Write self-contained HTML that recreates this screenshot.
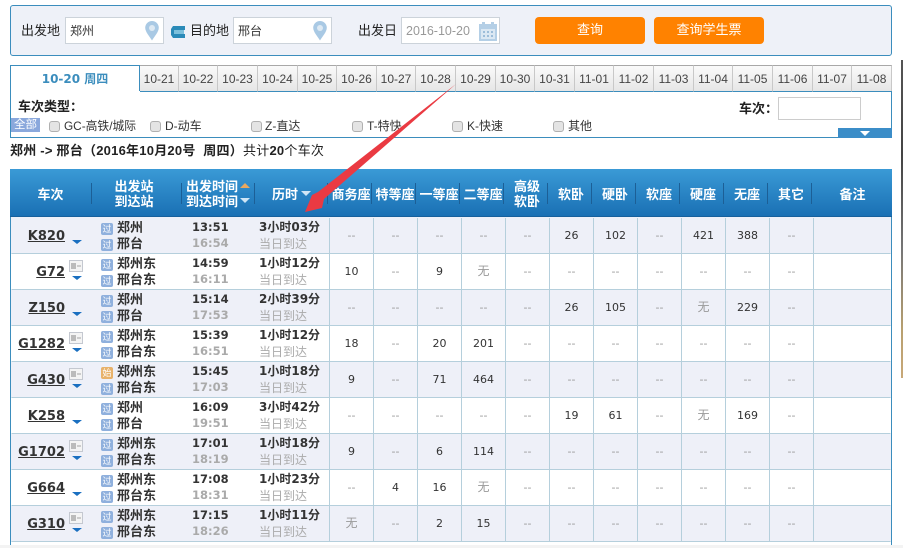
<!DOCTYPE html>
<html><head><meta charset="utf-8"><style>
html,body{margin:0;padding:0;width:903px;height:548px;overflow:hidden;background:#fff;font-family:"Liberation Sans","Noto Sans CJK SC",sans-serif;color:#222}
.a{position:absolute}
#top{left:10px;top:5px;width:880px;height:49px;background:#eef1f8;border:1px solid #3b8dbd;border-radius:3px}
.l{font-size:13px;top:22px;line-height:17px;color:#222}
.inp{top:17px;height:25px;background:#fff;border:1px solid #ccd3da;font-size:12px;line-height:27px;padding-left:4px;color:#333;box-sizing:content-box}
.btn{top:17px;height:27px;background:#ff8200;border-radius:4px;color:#fff;font-size:13px;line-height:26px;text-align:center}
.tab{top:65px;height:25px;background:linear-gradient(#fafafa,#e6e6e6);border-top:1px solid #a8a8a8;border-right:1px solid #c8c8c8;border-bottom:1px solid #3b8dbd;font-size:12px;line-height:26px;text-align:center;color:#444;box-sizing:content-box}
.cb{top:121px;width:9px;height:9px;background:#e4e4e4;border:1px solid #b0b0b0;border-radius:3px}
.ct{top:118px;font-size:12px;line-height:17px;color:#333}
#head{left:10px;top:169px;width:882px;height:48px;background:linear-gradient(#3a9ad6,#1a70b4);border-bottom:1px solid #17609c;box-sizing:border-box}
.h{position:absolute;top:169px;height:50px;color:#fff;font-weight:bold;font-size:13px;line-height:15px;text-align:center;display:flex;align-items:center;justify-content:center}
.s{position:absolute;top:183px;width:1px;height:21px;background:#1c5f96}
.r{position:absolute;left:11px;width:880px;height:36px;border-bottom:1px solid #b5cfdc;box-sizing:border-box;border-left:1px solid;border-right:1px solid}
.o{background:#eef0f8;border-left-color:#eef0f8;border-right-color:#eef0f8}
.w{background:#fff;border-left-color:#fff;border-right-color:#fff}
.r i{font-style:normal;position:absolute;top:0;height:35px;width:43px;border-left:1px solid #b5cfdc;text-align:center;line-height:35px;font-size:11px;font-family:"DejaVu Sans","Noto Sans CJK SC",sans-serif;color:#333}
.r i.n{color:#999}
.r b.t{position:absolute;top:11px;font:bold 13px/16px "DejaVu Sans",sans-serif;color:#333;text-decoration:underline;width:55px;text-align:right;left:0;margin-left:-2px}
.r u{position:absolute;left:60px;top:22px;width:0;height:0;border-style:solid;border-color:#1a6fc0 transparent transparent;border-width:4px 5px 0;text-decoration:none}
.r s{position:absolute;left:57px;top:6px;width:14px;height:12px;background:#f4f4f4;border:1px solid #c4c8d0;text-decoration:none;box-sizing:border-box}
.r s:before{content:"";position:absolute;left:1px;top:2px;width:5px;height:6px;background:#bbb}
.r s:after{content:"";position:absolute;left:7px;top:4px;width:4px;height:2px;background:#ccc}
.r em{position:absolute;left:89px;width:12px;height:12px;background:#8fb0dd;border-radius:2px;font-style:normal;color:#fff;font-size:9px;line-height:12px;text-align:center}
.r em.q{background:#e8b26a}
.r span{position:absolute;line-height:16px;white-space:nowrap}
.st{left:105px;font-size:13px;font-weight:bold;color:#333}
.tm{left:180px;font:bold 11.5px/16px "DejaVu Sans",sans-serif!important;color:#333;transform:translateY(-1px)}
.tm.g{color:#aaa}
.du{left:247px;font:bold 12px/16px "DejaVu Sans","Noto Sans CJK SC",sans-serif!important;color:#333;transform:translateY(-1px)}
.dd{left:247px;font-size:12px;color:#aaa}
</style></head><body>
<div class="a" id="top"></div>
<div class="a l" style="left:21px">出发地</div>
<div class="a inp" style="left:65px;width:93px">郑州</div>
<svg class="a" style="left:145px;top:21px" width="14" height="20" viewBox="0 0 14 20"><path d="M7 0a6.8 6.8 0 0 1 6.8 6.8C13.8 11 9 16 7 19.5 5 16 .2 11 .2 6.8A6.8 6.8 0 0 1 7 0z" fill="#a9c9e4"/><circle cx="7" cy="7" r="3" fill="#dde9f3"/></svg>
<svg class="a" style="left:171px;top:26px" width="14" height="12" viewBox="0 0 14 12"><path d="M2 0h12v4H3v4h11v4H2L0 9V3z" fill="#2a8ab8"/><rect x="3" y="4" width="10" height="4" fill="#7cc0dc"/></svg>
<div class="a l" style="left:190px">目的地</div>
<div class="a inp" style="left:233px;width:93px">邢台</div>
<svg class="a" style="left:313px;top:21px" width="14" height="20" viewBox="0 0 14 20"><path d="M7 0a6.8 6.8 0 0 1 6.8 6.8C13.8 11 9 16 7 19.5 5 16 .2 11 .2 6.8A6.8 6.8 0 0 1 7 0z" fill="#a9c9e4"/><circle cx="7" cy="7" r="3" fill="#dde9f3"/></svg>
<div class="a l" style="left:358px">出发日</div>
<div class="a inp" style="left:401px;width:93px;color:#999;font-size:12.5px">2016-10-20</div>
<svg class="a" style="left:479px;top:21px" width="18" height="20" viewBox="0 0 18 20"><path d="M0 3h3V1h3v2h6V1h3v2h3v17H0z" fill="#b4cfe6"/><path d="M2 8h14v10H2z" fill="#dbe8f3"/><path d="M4 10h2v2H4zM8 10h2v2H8zM12 10h2v2h-2zM4 14h2v2H4zM8 14h2v2H8zM12 14h2v2h-2z" fill="#9cbdd9"/></svg>
<div class="a btn" style="left:535px;width:110px">查询</div>
<div class="a btn" style="left:654px;width:110px">查询学生票</div>

<div class="a" style="left:10px;top:65px;width:130px;height:26px;border-top:1px solid #3b8dbd;border-left:1px solid #3b8dbd;border-right:1px solid #3b8dbd;box-sizing:border-box;color:#3b8dbd;font:bold 12px/26px 'DejaVu Sans','Noto Sans CJK SC',sans-serif;text-align:center">10-20 周四</div>
<div class="a tab" style="left:140px;width:38px">10-21</div>
<div class="a tab" style="left:179px;width:38px">10-22</div>
<div class="a tab" style="left:218px;width:39px">10-23</div>
<div class="a tab" style="left:258px;width:39px">10-24</div>
<div class="a tab" style="left:298px;width:38px">10-25</div>
<div class="a tab" style="left:337px;width:39px">10-26</div>
<div class="a tab" style="left:377px;width:38px">10-27</div>
<div class="a tab" style="left:416px;width:39px">10-28</div>
<div class="a tab" style="left:456px;width:39px">10-29</div>
<div class="a tab" style="left:496px;width:38px">10-30</div>
<div class="a tab" style="left:535px;width:39px">10-31</div>
<div class="a tab" style="left:575px;width:38px">11-01</div>
<div class="a tab" style="left:614px;width:39px">11-02</div>
<div class="a tab" style="left:654px;width:39px">11-03</div>
<div class="a tab" style="left:694px;width:38px">11-04</div>
<div class="a tab" style="left:733px;width:39px">11-05</div>
<div class="a tab" style="left:773px;width:39px">11-06</div>
<div class="a tab" style="left:813px;width:38px">11-07</div>
<div class="a tab" style="left:852px;width:39px">11-08</div>

<div class="a" style="left:10px;top:91px;width:882px;height:47px;border-left:1px solid #3b8dbd;border-right:1px solid #3b8dbd;border-bottom:1px solid #3b8dbd;box-sizing:border-box"></div>
<div class="a" style="left:18px;top:99px;font-size:13px;font-weight:bold;line-height:16px;color:#222">车次类型：</div>
<div class="a" style="left:11px;top:118px;width:29px;height:14px;background:#8aa8dc;color:#fff;font-size:11.5px;line-height:14px;text-align:center">全部</div>
<div class="a cb" style="left:49px"></div><div class="a ct" style="left:64px;font-size:11.8px">GC-高铁/城际</div>
<div class="a cb" style="left:150px"></div><div class="a ct" style="left:165px">D-动车</div>
<div class="a cb" style="left:251px"></div><div class="a ct" style="left:265px">Z-直达</div>
<div class="a cb" style="left:352px"></div><div class="a ct" style="left:367px">T-特快</div>
<div class="a cb" style="left:452px"></div><div class="a ct" style="left:467px">K-快速</div>
<div class="a cb" style="left:553px"></div><div class="a ct" style="left:568px">其他</div>
<div class="a" style="left:739px;top:101px;font-size:13px;font-weight:bold;line-height:16px;color:#222">车次：</div>
<div class="a" style="left:778px;top:97px;width:83px;height:23px;border:1px solid #ccc;box-sizing:border-box;background:#fff"></div>
<div class="a" style="left:838px;top:128px;width:54px;height:10px;background:#3b8dc8"></div>
<div class="a" style="left:860px;top:131px;width:0;height:0;border:5px solid transparent;border-top:5px solid #fff;border-bottom:0"></div>

<div class="a" style="left:10px;top:142px;font-size:13px;line-height:17px;white-space:nowrap;color:#222;letter-spacing:.23px"><b>郑州 -&gt; 邢台（2016年10月20号&nbsp; 周四）</b>共计<b>20</b>个车次</div>

<div class="a" id="head"></div>
<div class="h" style="left:10px;width:81px">车次</div>
<div class="h" style="left:92px;width:84px">出发站<br>到达站</div>
<div class="h" style="left:184px;width:56px">出发时间<br>到达时间</div>
<div class="h" style="left:266px;width:38px">历时</div>
<div class="h" style="left:329px;width:44px">商务座</div>
<div class="h" style="left:373px;width:44px">特等座</div>
<div class="h" style="left:417px;width:44px">一等座</div>
<div class="h" style="left:461px;width:44px">二等座</div>
<div class="h" style="left:505px;width:44px">高级<br>软卧</div>
<div class="h" style="left:549px;width:44px">软卧</div>
<div class="h" style="left:593px;width:44px">硬卧</div>
<div class="h" style="left:637px;width:44px">软座</div>
<div class="h" style="left:681px;width:44px">硬座</div>
<div class="h" style="left:725px;width:44px">无座</div>
<div class="h" style="left:769px;width:44px">其它</div>
<div class="h" style="left:813px;width:79px">备注</div>
<div class="s" style="left:91px"></div><div class="s" style="left:181px"></div><div class="s" style="left:254px"></div><div class="s" style="left:327px"></div><div class="s" style="left:371px"></div><div class="s" style="left:415px"></div><div class="s" style="left:459px"></div><div class="s" style="left:503px"></div><div class="s" style="left:547px"></div><div class="s" style="left:591px"></div><div class="s" style="left:635px"></div><div class="s" style="left:679px"></div><div class="s" style="left:723px"></div><div class="s" style="left:767px"></div><div class="s" style="left:811px"></div>
<div class="a" style="left:240px;top:183px;border:5px solid transparent;border-bottom:5px solid #e8a860;border-top:0"></div>
<div class="a" style="left:240px;top:198px;border:5px solid transparent;border-top:5px solid #cfe6f6;border-bottom:0"></div>
<div class="a" style="left:301px;top:191px;border:5px solid transparent;border-top:5px solid #cfe6f6;border-bottom:0"></div>

<div class="a" style="left:11px;top:217px;width:880px;height:2px;background:#eef0f8"></div>
<div id="rows">
<div class="r o" style="top:218px"><b class="t">K820</b><u></u><em style="top:5px">过</em><span class="st" style="top:2px">郑州</span><em style="top:21px">过</em><span class="st" style="top:18px">邢台</span><span class="tm" style="top:2px">13:51</span><span class="tm g" style="top:18px">16:54</span><span class="du" style="top:2px">3小时03分</span><span class="dd" style="top:18px">当日到达</span><i class="n" style="left:317px">--</i><i class="n" style="left:361px">--</i><i class="n" style="left:405px">--</i><i class="n" style="left:449px">--</i><i class="n" style="left:493px">--</i><i style="left:537px">26</i><i style="left:581px">102</i><i class="n" style="left:625px">--</i><i style="left:669px">421</i><i style="left:713px">388</i><i class="n" style="left:757px">--</i><i style="left:801px;width:77px"></i></div>
<div class="r w" style="top:254px"><b class="t">G72</b><s></s><u></u><em style="top:5px">过</em><span class="st" style="top:2px">郑州东</span><em style="top:21px">过</em><span class="st" style="top:18px">邢台东</span><span class="tm" style="top:2px">14:59</span><span class="tm g" style="top:18px">16:11</span><span class="du" style="top:2px">1小时12分</span><span class="dd" style="top:18px">当日到达</span><i style="left:317px">10</i><i class="n" style="left:361px">--</i><i style="left:405px">9</i><i class="n" style="left:449px;font-size:12px">无</i><i class="n" style="left:493px">--</i><i class="n" style="left:537px">--</i><i class="n" style="left:581px">--</i><i class="n" style="left:625px">--</i><i class="n" style="left:669px">--</i><i class="n" style="left:713px">--</i><i class="n" style="left:757px">--</i><i style="left:801px;width:77px"></i></div>
<div class="r o" style="top:290px"><b class="t">Z150</b><u></u><em style="top:5px">过</em><span class="st" style="top:2px">郑州</span><em style="top:21px">过</em><span class="st" style="top:18px">邢台</span><span class="tm" style="top:2px">15:14</span><span class="tm g" style="top:18px">17:53</span><span class="du" style="top:2px">2小时39分</span><span class="dd" style="top:18px">当日到达</span><i class="n" style="left:317px">--</i><i class="n" style="left:361px">--</i><i class="n" style="left:405px">--</i><i class="n" style="left:449px">--</i><i class="n" style="left:493px">--</i><i style="left:537px">26</i><i style="left:581px">105</i><i class="n" style="left:625px">--</i><i class="n" style="left:669px;font-size:12px">无</i><i style="left:713px">229</i><i class="n" style="left:757px">--</i><i style="left:801px;width:77px"></i></div>
<div class="r w" style="top:326px"><b class="t">G1282</b><s></s><u></u><em style="top:5px">过</em><span class="st" style="top:2px">郑州东</span><em style="top:21px">过</em><span class="st" style="top:18px">邢台东</span><span class="tm" style="top:2px">15:39</span><span class="tm g" style="top:18px">16:51</span><span class="du" style="top:2px">1小时12分</span><span class="dd" style="top:18px">当日到达</span><i style="left:317px">18</i><i class="n" style="left:361px">--</i><i style="left:405px">20</i><i style="left:449px">201</i><i class="n" style="left:493px">--</i><i class="n" style="left:537px">--</i><i class="n" style="left:581px">--</i><i class="n" style="left:625px">--</i><i class="n" style="left:669px">--</i><i class="n" style="left:713px">--</i><i class="n" style="left:757px">--</i><i style="left:801px;width:77px"></i></div>
<div class="r o" style="top:362px"><b class="t">G430</b><s></s><u></u><em class="q" style="top:5px">始</em><span class="st" style="top:2px">郑州东</span><em style="top:21px">过</em><span class="st" style="top:18px">邢台东</span><span class="tm" style="top:2px">15:45</span><span class="tm g" style="top:18px">17:03</span><span class="du" style="top:2px">1小时18分</span><span class="dd" style="top:18px">当日到达</span><i style="left:317px">9</i><i class="n" style="left:361px">--</i><i style="left:405px">71</i><i style="left:449px">464</i><i class="n" style="left:493px">--</i><i class="n" style="left:537px">--</i><i class="n" style="left:581px">--</i><i class="n" style="left:625px">--</i><i class="n" style="left:669px">--</i><i class="n" style="left:713px">--</i><i class="n" style="left:757px">--</i><i style="left:801px;width:77px"></i></div>
<div class="r w" style="top:398px"><b class="t">K258</b><u></u><em style="top:5px">过</em><span class="st" style="top:2px">郑州</span><em style="top:21px">过</em><span class="st" style="top:18px">邢台</span><span class="tm" style="top:2px">16:09</span><span class="tm g" style="top:18px">19:51</span><span class="du" style="top:2px">3小时42分</span><span class="dd" style="top:18px">当日到达</span><i class="n" style="left:317px">--</i><i class="n" style="left:361px">--</i><i class="n" style="left:405px">--</i><i class="n" style="left:449px">--</i><i class="n" style="left:493px">--</i><i style="left:537px">19</i><i style="left:581px">61</i><i class="n" style="left:625px">--</i><i class="n" style="left:669px;font-size:12px">无</i><i style="left:713px">169</i><i class="n" style="left:757px">--</i><i style="left:801px;width:77px"></i></div>
<div class="r o" style="top:434px"><b class="t">G1702</b><s></s><u></u><em style="top:5px">过</em><span class="st" style="top:2px">郑州东</span><em style="top:21px">过</em><span class="st" style="top:18px">邢台东</span><span class="tm" style="top:2px">17:01</span><span class="tm g" style="top:18px">18:19</span><span class="du" style="top:2px">1小时18分</span><span class="dd" style="top:18px">当日到达</span><i style="left:317px">9</i><i class="n" style="left:361px">--</i><i style="left:405px">6</i><i style="left:449px">114</i><i class="n" style="left:493px">--</i><i class="n" style="left:537px">--</i><i class="n" style="left:581px">--</i><i class="n" style="left:625px">--</i><i class="n" style="left:669px">--</i><i class="n" style="left:713px">--</i><i class="n" style="left:757px">--</i><i style="left:801px;width:77px"></i></div>
<div class="r w" style="top:470px"><b class="t">G664</b><u></u><em style="top:5px">过</em><span class="st" style="top:2px">郑州东</span><em style="top:21px">过</em><span class="st" style="top:18px">邢台东</span><span class="tm" style="top:2px">17:08</span><span class="tm g" style="top:18px">18:31</span><span class="du" style="top:2px">1小时23分</span><span class="dd" style="top:18px">当日到达</span><i class="n" style="left:317px">--</i><i style="left:361px">4</i><i style="left:405px">16</i><i class="n" style="left:449px;font-size:12px">无</i><i class="n" style="left:493px">--</i><i class="n" style="left:537px">--</i><i class="n" style="left:581px">--</i><i class="n" style="left:625px">--</i><i class="n" style="left:669px">--</i><i class="n" style="left:713px">--</i><i class="n" style="left:757px">--</i><i style="left:801px;width:77px"></i></div>
<div class="r o" style="top:506px"><b class="t">G310</b><s></s><u></u><em style="top:5px">过</em><span class="st" style="top:2px">郑州东</span><em style="top:21px">过</em><span class="st" style="top:18px">邢台东</span><span class="tm" style="top:2px">17:15</span><span class="tm g" style="top:18px">18:26</span><span class="du" style="top:2px">1小时11分</span><span class="dd" style="top:18px">当日到达</span><i class="n" style="left:317px;font-size:12px">无</i><i class="n" style="left:361px">--</i><i style="left:405px">2</i><i style="left:449px">15</i><i class="n" style="left:493px">--</i><i class="n" style="left:537px">--</i><i class="n" style="left:581px">--</i><i class="n" style="left:625px">--</i><i class="n" style="left:669px">--</i><i class="n" style="left:713px">--</i><i class="n" style="left:757px">--</i><i style="left:801px;width:77px"></i></div>
</div>
<div class="a" style="left:10px;top:217px;width:1px;height:328px;background:#3b8dbd"></div>
<div class="a" style="left:891px;top:217px;width:1px;height:328px;background:#3b8dbd"></div>
<div class="a" style="left:0;top:545px;width:903px;height:3px;background:#f3f3f3"></div>
<div class="a" style="left:901px;top:60px;width:2px;height:318px;background:linear-gradient(#555 0,#444 30%,#777 60%,#b8a070 85%,#c8a878 100%)"></div>
<svg class="a" style="left:0;top:0" width="903" height="548"><path d="M456 84 L318 192 L312 195 L305 212 L322 208 L324 199 Z" fill="#ea3a42"/></svg>
</body></html>
